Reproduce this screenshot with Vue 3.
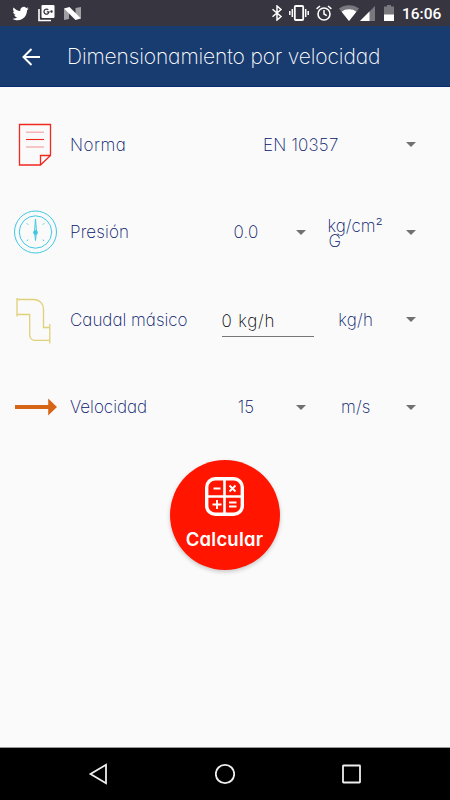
<!--
  Pantalla: dimensionamiento por velocidad
  Formulario con norma, presión, caudal y velocidad
-->

<template>
  <div class="screen">
    <!-- Barra de estado -->
    <div class="status">
      <div class="status__left">
        <svg class="status__twitter" viewBox="0 0 24 24">
          <path d="M23.6 4.9c-.8.4-1.7.6-2.7.8 1-.6 1.7-1.5 2.100-2.600-.9.5-1.9.9-3 1.100a4.7 4.7 0 0 0-8.100 4.300C8 8.300 4.500 6.400 2.200 3.600c-1.300 2.200-.6 4.900 1.500 6.300-.8 0-1.500-.2-2.100-.6 0 2.300 1.600 4.300 3.800 4.700-.7.2-1.400.2-2.100.1.6 1.900 2.300 3.200 4.400 3.300A9.500 9.500 0 0 1 .6 19.300c9.600 5.600 20.700-.3 20.600-12 .9-.7 1.700-1.500 2.400-2.400z" />
        </svg>
        <svg class="status__gplus" viewBox="0 0 17 17">
          <path d="M1 4v11.500h12" fill="none" stroke="#fff" stroke-width="1.6" />
          <rect x="3.5" y="0" width="13" height="13" rx="1.2" />
          <path d="M10.300 4.900A2.500 2.500 0 1 0 11 6.800H8.800M12.300 6.500h2.400M13.500 5.300v2.400" fill="none" stroke="#373640" stroke-width="1.3" />
        </svg>
        <svg class="status__n" viewBox="0 0 17 13">
          <path d="M0 1.500 5 4v8l-5 1zM17 0v11.500L11.500 9V1z" fill="#a09fa4" />
          <path d="M0 1.500 5.500 0 17 11.500 11.500 13z" />
        </svg>
      </div>
      <div class="status__right">
        <svg class="status__bt" viewBox="0 0 12 16">
          <path d="M1.500 4.300 10 11.500 6 15V1l4 3.500-8.500 7.200" fill="none" stroke="#fff" stroke-width="1.5" />
        </svg>
        <svg class="status__vibrate" viewBox="0 0 20 16">
          <rect x="5.8" y="1" width="8.4" height="14" rx="1" fill="none" stroke="#fff" stroke-width="1.8" />
          <path d="M.8 6v4M3.300 4v8M16.700 4v8M19.200 6v4" stroke="#fff" stroke-width="1.5" />
        </svg>
        <svg class="status__alarm" viewBox="0 0 16 16">
          <path d="M.6 3.800 4 1M15.400 3.800 12 1M8 5v4l2.800 1.700" fill="none" stroke="#fff" stroke-width="1.5" />
          <circle cx="8" cy="9" r="6" fill="none" stroke="#fff" stroke-width="1.6" />
        </svg>
        <svg class="status__wifi" viewBox="0 0 20 16">
          <path d="M10 16 0 3.500C5.500-1 14.500-1 20 3.500z" fill="#79787e" />
          <path d="M10 16 2.600 6.700c4-3.300 10.800-3.300 14.800 0z" />
        </svg>
        <svg class="status__signal" viewBox="0 0 15 15">
          <path d="M15 0v15H0z" fill="#79787e" />
          <path d="M9.500 5.500V15H0z" />
        </svg>
        <svg class="status__battery" viewBox="0 0 10 16">
          <path d="M0 1.500h3V0h4v1.500h3V16H0z" fill="#79787e" />
          <path d="M0 9.500h10V16H0z" />
        </svg>
        <span class="status__time">16:06</span>
      </div>
    </div>

    <!-- Cabecera -->
    <header class="toolbar">
      <svg class="toolbar__back" viewBox="0 0 18 18">
        <path d="M18 9H1.500M9.500 1 1.500 9l8 8" fill="none" stroke="#fff" stroke-width="2" />
      </svg>
      <h1 class="toolbar__title">Dimensionamiento por velocidad</h1>
    </header>

    <!-- Formulario -->
    <main class="form">
      <div v-for="row in rows" :key="row.id" class="row">
        <div class="row__icon">
          <svg v-if="row.id === 'norma'" viewBox="0 0 44 44" fill="none" stroke="#f0281e">
            <path d="M5.500 1.500h31v31l-10 9.500h-21zM36.500 32.500h-10V42" stroke-width="1.3" />
            <path d="M12 16.500h18" stroke-width="1.1" />
            <path d="M12 9.200h18M12 24h18" stroke="#f5b5b5" stroke-width="1.6" />
          </svg>
          <svg v-else-if="row.id === 'presion'" viewBox="0 0 44 44" fill="none" stroke="#3fc8e4">
            <circle cx="21.5" cy="22" r="21" />
            <circle cx="21.5" cy="22" r="16.2" />
            <path d="m21.500 9-1 12.500 1 9 1-9z" />
            <circle cx="21.5" cy="22.5" r="1.9" fill="#3fc8e4" />
            <path d="m12.800 13.300 1.400 1.400M30.200 13.300l-1.400 1.400M12.800 31l1.400-1.400M30.200 31l-1.400-1.400" />
          </svg>
          <svg v-else-if="row.id === 'caudal'" viewBox="0 0 44 44" fill="none" stroke="#dfd07a" stroke-width="1.3">
            <path d="M3 0v18.500M35.800 26v19.500" />
            <path d="M3 1.500h17a9.500 9.500 0 0 1 9.500 9.500v18.500h6.300M3 16.500h12.700v20.800a5 5 0 0 0 5 5h15.100" />
          </svg>
          <svg v-else viewBox="0 0 44 44" fill="#d66518">
            <path d="M1 20h33.200v-6.500l8.800 8.500-8.800 8.500V24H1z" />
          </svg>
        </div>

        <span class="row__label" :class="`row__label--${row.id}`">{{ row.label }}</span>

        <!-- Campo editable -->
        <div v-if="row.editable" class="input">{{ row.value }}</div>
        <div v-else class="spinner" :class="{ 'spinner--wide': !row.unit }">
          <span class="spinner__text">{{ row.value }}</span>
          <span class="spinner__arrow"></span>
        </div>

        <!-- Unidad -->
        <div v-if="row.unit" class="spinner">
          <span class="spinner__text" :class="{ 'spinner__text--double': row.id === 'presion' }">{{ row.unit }}</span>
          <span class="spinner__arrow"></span>
        </div>
      </div>

      <button class="calc">
        <svg class="calc__icon" viewBox="0 0 39 39" fill="none" stroke="#fff">
          <rect x="1.7" y="1.7" width="35.6" height="35.6" rx="8.5" stroke-width="3.4" />
          <path d="M19.500 2v35M2 19.500h35" stroke-width="2.6" />
          <path d="M8.500 11.500h7M24.500 8.500l6 6M30.500 8.500l-6 6M7.500 27.500h9M12 23v9M24 25.500h7.500M24 29.500h7.500" stroke-width="1.9" />
        </svg>
        <span class="calc__text">Calcular</span>
      </button>
    </main>

    <!-- Barra de navegación -->
    <nav class="nav">
      <svg viewBox="0 0 20 22"><path d="M18 1.800v18.400L2.500 11z" /></svg>
      <svg viewBox="0 0 20 22"><circle cx="10" cy="11" r="9.2" /></svg>
      <svg viewBox="0 0 20 22"><rect x="1" y="2.500" width="17" height="17" rx=".5" /></svg>
    </nav>
  </div>
</template>

<script setup>
// Filas del formulario
const rows = [
  { id: 'norma', label: 'Norma', value: 'EN 10357' },
  { id: 'presion', label: 'Presión', value: '0.0', unit: 'kg/cm² G' },
  { id: 'caudal', label: 'Caudal másico', value: '0 kg/h', unit: 'kg/h', editable: true },
  { id: 'velocidad', label: 'Velocidad', value: '15', unit: 'm/s' }
]
</script>

<style>
body {
  margin: 0;
}
</style>

<style scoped>
.screen {
  display: flex;
  flex-direction: column;
  width: 450px;
  height: 800px;
  overflow: hidden;
  background: #fafafa;
  color: #04146b;
  font-family: Inter, 'Open Sans', sans-serif;
  font-weight: 200;
  font-feature-settings: 'cv11';
}

svg {
  display: block;
  flex: none;
}

/* Barra de estado */
.status {
  display: flex;
  justify-content: space-between;
  flex: none;
  height: 26px;
  box-sizing: border-box;
  padding: 0 9px 0 12px;
  background: #373640;
}

.status__left,
.status__right {
  display: flex;
  align-items: center;
}

.status svg {
  fill: #fff;
}

.status__twitter {
  width: 17px;
  height: 17px;
}

.status__gplus {
  width: 17px;
  height: 17px;
  margin-left: 9px;
}

.status__n {
  width: 17px;
  height: 13px;
  margin-left: 9px;
}

.status__bt {
  width: 12px;
  height: 16px;
}

.status__vibrate {
  width: 20px;
  height: 16px;
  margin-left: 6px;
}

.status__alarm {
  width: 16px;
  height: 16px;
  margin-left: 7px;
}

.status__wifi {
  width: 20px;
  height: 16px;
  margin-left: 7px;
}

.status__signal {
  width: 15px;
  height: 15px;
  margin-left: 1px;
}

.status__battery {
  width: 10px;
  height: 16px;
  margin-left: 9px;
}

.status__time {
  width: 39px;
  margin-left: 8px;
  padding-top: 2px;
  color: #fff;
  font-family: Roboto, sans-serif;
  font-size: 15.5px;
  font-weight: 500;
  line-height: 20px;
  white-space: nowrap;
}

/* Cabecera */
.toolbar {
  display: flex;
  align-items: center;
  flex: none;
  height: 61px;
  box-sizing: border-box;
  padding: 2px 0 0 22px;
  border-bottom: 1px solid #062a70;
  background: #183b70;
}

.toolbar__back {
  width: 18px;
  height: 18px;
}

.toolbar__title {
  margin: 0 0 0 27px;
  color: #fff;
  font-size: 21px;
  font-weight: 200;
  letter-spacing: -0.14px;
  line-height: 28px;
  white-space: nowrap;
}

/* Formulario */
.form {
  display: flex;
  flex-direction: column;
  flex: 1;
  padding-top: 14px;
}

.row {
  display: grid;
  grid-template-columns: 56px 148.5px 110px 109.5px;
  align-items: center;
  height: 87.5px;
  padding-left: 14px;
  font-size: 17px;
}

.row__icon svg {
  width: 44px;
  height: 44px;
  overflow: visible;
}

.row__label {
  white-space: nowrap;
}

.row__label--norma {
  letter-spacing: 0.5px;
}

.row__label--presion {
  letter-spacing: 0.15px;
}

.spinner {
  display: grid;
  grid-template-columns: 1fr 55px;
  align-items: center;
}

.spinner--wide {
  grid-column: span 2;
}

.spinner__text {
  letter-spacing: 0.2px;
  text-align: center;
  white-space: nowrap;
}

.spinner__text--double {
  padding-top: 3px;
  letter-spacing: 0;
  text-align: left;
  text-indent: -1px;
  white-space: normal;
  line-height: 14.5px;
}

.spinner__arrow {
  justify-self: center;
  border: 5.5px solid transparent;
  border-top-color: #717171;
  border-bottom: 0;
}

.input {
  width: 92px;
  height: 31px;
  margin: 3px 0 0 3px;
  box-sizing: border-box;
  border-bottom: 1px solid #777;
  color: #000;
  letter-spacing: 0.8px;
  line-height: 31px;
  white-space: nowrap;
}

/* Botón calcular */
.calc {
  display: flex;
  flex-direction: column;
  align-items: center;
  align-self: center;
  width: 110px;
  height: 110px;
  margin: 8.5px 1px 0 0;
  padding: 17px 0 0;
  border: 0;
  border-radius: 50%;
  background: #ff1500;
  box-shadow: 0 2px 4px rgba(0, 0, 0, 0.2);
  color: #fff;
  font-family: inherit;
  font-feature-settings: inherit;
}

.calc__icon {
  width: 39px;
  height: 39px;
}

.calc__text {
  margin-top: 11px;
  font-size: 18.5px;
  font-weight: 600;
  letter-spacing: 0.2px;
  line-height: 24px;
}

/* Barra de navegación */
.nav {
  display: flex;
  align-items: center;
  justify-content: space-between;
  flex: none;
  height: 53px;
  box-sizing: border-box;
  padding: 0 88px;
  border-top: 1px solid #999;
  background: #000;
}

.nav svg {
  width: 20px;
  height: 22px;
  fill: none;
  stroke: #eee;
  stroke-width: 1.8;
}
</style>
